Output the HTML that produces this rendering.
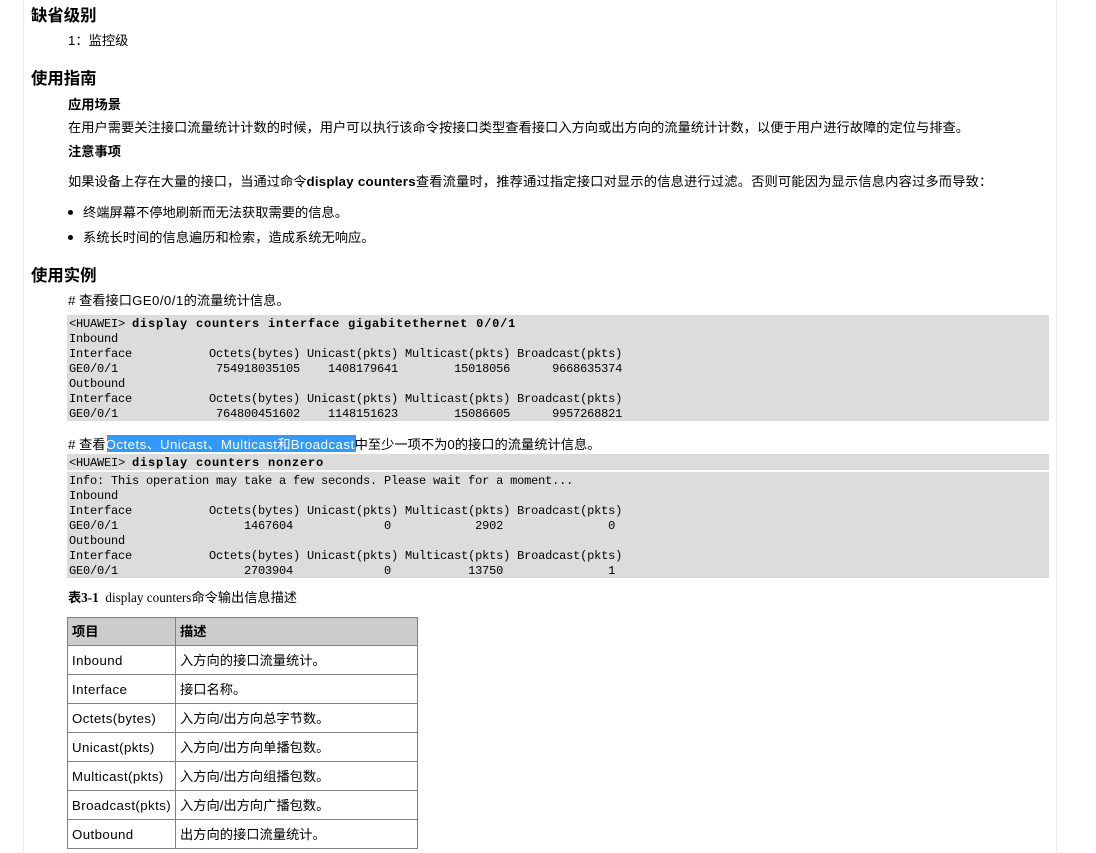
<!DOCTYPE html>
<html lang="zh-CN">
<head>
<meta charset="utf-8">
<title>display counters</title>
<style>
html,body{margin:0;padding:0;background:#fff;}
body{width:1096px;height:853px;position:relative;overflow:hidden;color:#000;font-family:"Liberation Sans","Noto Sans CJK SC",sans-serif;font-size:13.26px;}
.t{position:absolute;white-space:nowrap;line-height:20px;height:20px;}
.h{position:absolute;left:31px;white-space:nowrap;font-size:16.4px;font-weight:bold;line-height:22px;height:22px;}
.g{position:absolute;left:67px;width:982px;background:#dcdcdc;}
pre{position:absolute;left:69px;margin:0;font-family:"Liberation Mono",monospace;font-size:12px;letter-spacing:-.2px;line-height:15px;color:#000;}
pre b{color:#000;letter-spacing:.8px;}
.dot{position:absolute;left:68px;width:5px;height:5px;border-radius:50%;background:#000;}
.hlbg{position:absolute;left:107px;top:435px;width:249px;height:17px;background:#3399ff;}
.hl{color:#fff;}
.l{letter-spacing:.42px;}
.hl .l{letter-spacing:.48px;}
.line{position:absolute;background:#808080;}
.bar{position:absolute;top:0;width:1px;height:853px;background:#ececec;}
</style>
</head>
<body>
<div class="bar" style="left:23px"></div>
<div class="bar" style="left:1056px"></div>

<div class="h" style="top:5px">缺省级别</div>
<div class="t" style="left:68px;top:31px">1：监控级</div>
<div class="h" style="top:68px">使用指南</div>
<div class="t" style="left:68px;top:95px"><b>应用场景</b></div>
<div class="t" style="left:68px;top:118px">在用户需要关注接口流量统计计数的时候，用户可以执行该命令按接口类型查看接口入方向或出方向的流量统计计数，以便于用户进行故障的定位与排查。</div>
<div class="t" style="left:68px;top:142px"><b>注意事项</b></div>
<div class="t" style="left:68px;top:172px">如果设备上存在大量的接口，当通过命令<b style="letter-spacing:.25px">display counters</b><span style="letter-spacing:.16px">查看流量时，推荐通过指定接口对显示的信息进行过滤。否则可能因为显示信息内容过多而导致：</span></div>
<div class="dot" style="top:210px"></div>
<div class="t" style="left:83px;top:203px">终端屏幕不停地刷新而无法获取需要的信息。</div>
<div class="dot" style="top:235px"></div>
<div class="t" style="left:83px;top:228px">系统长时间的信息遍历和检索，造成系统无响应。</div>
<div class="h" style="top:265px">使用实例</div>
<div class="t" style="left:68px;top:291px"># 查看接口<span class="l">GE0/0/1</span>的流量统计信息。</div>

<div class="g" style="top:315px;height:106px"></div>
<pre style="top:317px">&lt;HUAWEI&gt; <b>display counters interface gigabitethernet 0/0/1</b>
Inbound
Interface           Octets(bytes) Unicast(pkts) Multicast(pkts) Broadcast(pkts)
GE0/0/1              754918035105    1408179641        15018056      9668635374
Outbound
Interface           Octets(bytes) Unicast(pkts) Multicast(pkts) Broadcast(pkts)
GE0/0/1              764800451602    1148151623        15086605      9957268821</pre>

<div class="hlbg"></div>
<div class="t" style="left:68px;top:435px"># 查看<span class="hl"><span class="l">Octets</span>、<span class="l">Unicast</span>、<span class="l">Multicast</span>和<span class="l">Broadcast</span></span>中至少一项不为0的接口的流量统计信息。</div>

<div class="g" style="top:454px;height:16px"></div>
<pre style="top:456px">&lt;HUAWEI&gt; <b>display counters nonzero</b></pre>
<div class="g" style="top:472px;height:106px"></div>
<pre style="top:474px">Info: This operation may take a few seconds. Please wait for a moment...
Inbound
Interface           Octets(bytes) Unicast(pkts) Multicast(pkts) Broadcast(pkts)
GE0/0/1                  1467604             0            2902               0
Outbound
Interface           Octets(bytes) Unicast(pkts) Multicast(pkts) Broadcast(pkts)
GE0/0/1                  2703904             0           13750               1</pre>

<div class="t" style="left:68px;top:588px;font-family:'Liberation Serif','Noto Sans CJK SC',serif;font-size:13.2px"><b>表3-1</b>&nbsp;&nbsp;display counters命令输出信息描述</div>

<div style="position:absolute;left:67px;top:617px;width:351px;height:29px;background:#ccc"></div>
<div class="line" style="left:67px;top:617px;width:351px;height:1px"></div>
<div class="line" style="left:67px;top:645px;width:351px;height:1px"></div>
<div class="line" style="left:67px;top:674px;width:351px;height:1px"></div>
<div class="line" style="left:67px;top:703px;width:351px;height:1px"></div>
<div class="line" style="left:67px;top:732px;width:351px;height:1px"></div>
<div class="line" style="left:67px;top:761px;width:351px;height:1px"></div>
<div class="line" style="left:67px;top:790px;width:351px;height:1px"></div>
<div class="line" style="left:67px;top:819px;width:351px;height:1px"></div>
<div class="line" style="left:67px;top:848px;width:351px;height:1px"></div>
<div class="line" style="left:67px;top:617px;width:1px;height:232px"></div>
<div class="line" style="left:175px;top:617px;width:1px;height:232px"></div>
<div class="line" style="left:417px;top:617px;width:1px;height:232px"></div>

<div class="t" style="left:72px;top:622px"><b>项目</b></div><div class="t" style="left:180px;top:622px"><b>描述</b></div>
<div class="t l" style="left:72px;top:651px">Inbound</div><div class="t" style="left:180px;top:651px">入方向的接口流量统计。</div>
<div class="t l" style="left:72px;top:680px">Interface</div><div class="t" style="left:180px;top:680px">接口名称。</div>
<div class="t l" style="left:72px;top:709px">Octets(bytes)</div><div class="t" style="left:180px;top:709px">入方向/出方向总字节数。</div>
<div class="t l" style="left:72px;top:738px">Unicast(pkts)</div><div class="t" style="left:180px;top:738px">入方向/出方向单播包数。</div>
<div class="t l" style="left:72px;top:767px">Multicast(pkts)</div><div class="t" style="left:180px;top:767px">入方向/出方向组播包数。</div>
<div class="t l" style="left:72px;top:796px">Broadcast(pkts)</div><div class="t" style="left:180px;top:796px">入方向/出方向广播包数。</div>
<div class="t l" style="left:72px;top:825px">Outbound</div><div class="t" style="left:180px;top:825px">出方向的接口流量统计。</div>
</body>
</html>
